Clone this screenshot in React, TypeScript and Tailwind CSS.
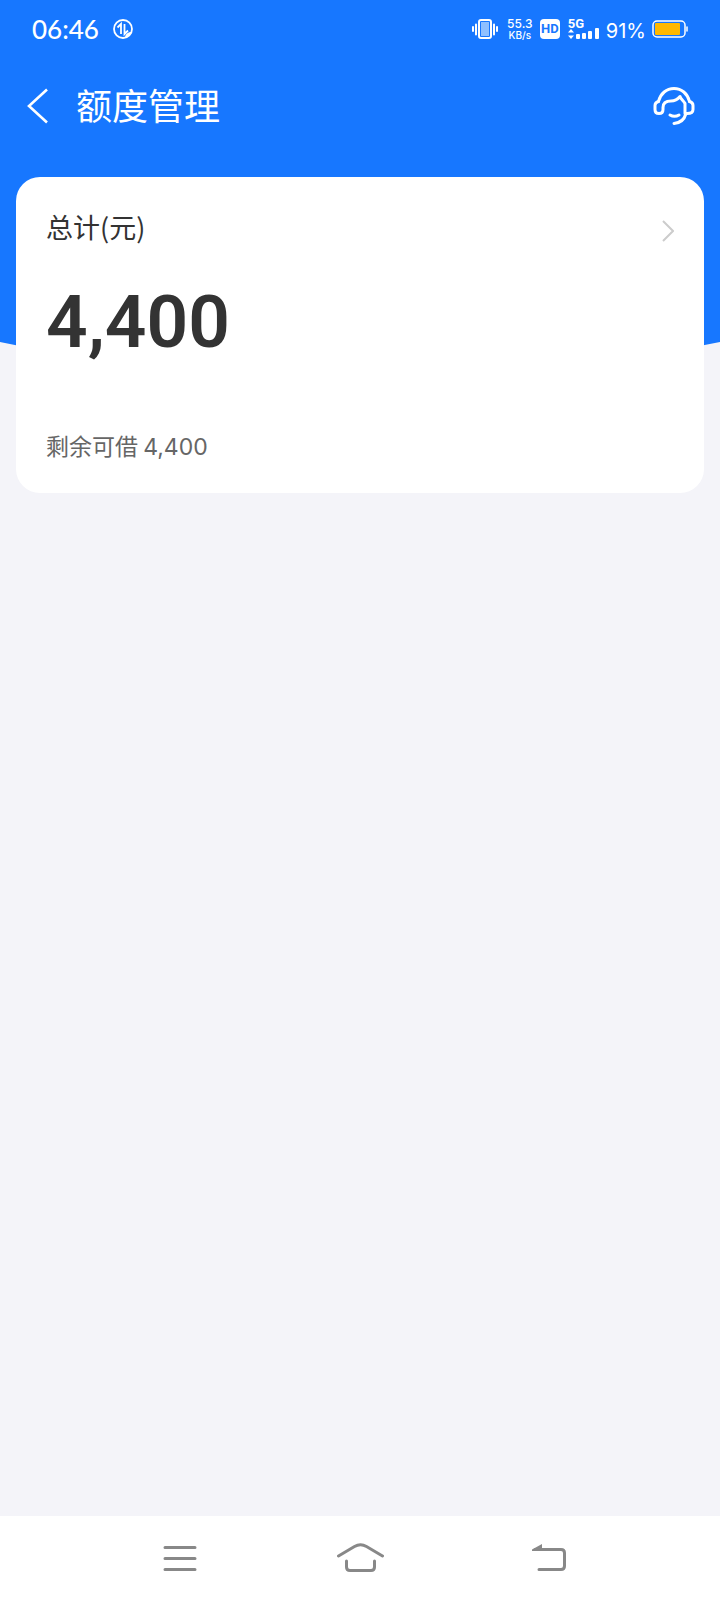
function StatusBar() {
  return (
    <div className="flex h-[58px] items-center justify-between px-8 text-white">
      <div className="flex items-center gap-[14px]">
        <time className="font-['Lato','Noto_Sans_CJK_SC',sans-serif] text-[26px] font-medium leading-8">06:46</time>
        <svg width="20" height="20" viewBox="0 0 20 20" fill="none" aria-hidden="true">
          <circle cx="10" cy="10" r="9" stroke="currentColor" strokeWidth="1.800" />
          <path d="M4.500 8.500L8 5v10M11.500 5v10l3.500-3.500" stroke="currentColor" strokeWidth="1.800" />
          <path d="M12 18.500c0-3 2.500-5.500 6.500-5.500-1 3-3 5-6.500 5.500z" fill="currentColor" />
        </svg>
      </div>
      <div className="flex items-center">
        <svg width="26" height="20" viewBox="0 0 26 20" fill="none" aria-hidden="true">
          <rect x="7" y="1" width="12" height="18" rx="2" stroke="currentColor" strokeWidth="2" />
          <rect x="9" y="3" width="8" height="14" fill="#8fc0ff" />
          <path d="M1 8v4M4 5.500v10M22 5.500v10M25 8v4" stroke="currentColor" strokeWidth="2" strokeLinecap="round" />
        </svg>
        <div className="ml-2 w-7 text-center font-['Inter',sans-serif] font-medium">
          <p className="text-[12px] leading-[12px]">55.3</p>
          <p className="text-[10px] leading-[10px]">KB/s</p>
        </div>
        <span className="ml-[6px] flex h-5 w-5 items-center justify-center rounded-[4px] bg-white font-['Roboto',sans-serif] text-[13px] font-bold leading-5 text-[#1777ff]">
          HD
        </span>
        <div className="ml-2 flex h-5 w-8 flex-col font-['Roboto',sans-serif]">
          <span className="text-[13px] font-bold leading-[10px]">5G</span>
          <svg width="32" height="10" viewBox="0 0 32 10" fill="currentColor" className="overflow-visible" aria-hidden="true">
            <path d="M0 3.500L3 0l3 3.500zM0 6.500L3 10l3-3.500z" />
            <rect x="8" y="5" width="4" height="5" rx="1" />
            <rect x="14" y="4" width="4" height="6" rx="1" />
            <rect x="20" y="2" width="4" height="8" rx="1" />
            <rect x="27" y="-1" width="4" height="11" rx="1" />
          </svg>
        </div>
        <span className="ml-[6px] mt-1 font-['Inter',sans-serif] text-[20px] leading-6">91%</span>
        <svg className="ml-[6px]" width="36" height="18" viewBox="0 0 36 18" fill="none" aria-hidden="true">
          <rect x="1" y="1" width="32" height="16" rx="4" stroke="currentColor" strokeWidth="1.500" />
          <rect x="3" y="3" width="25" height="12" rx="1" fill="#ffb800" />
          <path d="M35 7v4" stroke="currentColor" strokeWidth="1.500" strokeLinecap="round" />
        </svg>
      </div>
    </div>
  );
}

function Header() {
  return (
    <header className="flex h-24 items-center justify-between pl-[26px] pr-[25px] text-white">
      <div className="flex items-center gap-7">
        <button type="button" aria-label="返回">
          <svg width="22" height="36" viewBox="0 0 22 36" fill="none">
            <path d="M21 1.500L3 18l18 16.500" stroke="currentColor" strokeWidth="2.600" />
          </svg>
        </button>
        <h1 className="pb-1 text-[36px] leading-[48px]">额度管理</h1>
      </div>
      <button type="button" aria-label="客服">
        <svg width="42" height="40" viewBox="0 0 42 40" fill="none" stroke="currentColor" strokeWidth="3" strokeLinecap="round" strokeLinejoin="round">
          <path d="M5.500 15.500C7.500 7.500 13.500 2.500 21 2.500s13.500 5 15.500 13" />
          <path d="M5.500 15.500c-2 .5-3.500 2-3.500 4v4c0 2.500 1.500 4 4 4s4-1.500 4-4v-2c0-4.500 3.500-6.500 8-6.500 4 0 6.500-1.500 9-4.500 1 3 3.500 4 5 7v10h2c3.500 0 6-1.500 6-4v-4c0-2-1.500-3.500-3.500-4" />
          <path d="M17 29c2.500 1.500 6.500 1.500 9 0" />
          <path d="M33 27.500c-1.500 5.500-6 9.500-12 10" />
        </svg>
      </button>
    </header>
  );
}

function QuotaCard() {
  return (
    <section className="mx-4 mt-[23px] rounded-3xl bg-white px-[30px] pb-[30px] pt-8">
      <a href="#total" className="flex items-center justify-between text-[#333]">
        <h2 className="text-[27px] leading-9">总计(元)</h2>
        <svg width="13" height="22" viewBox="0 0 13 22" fill="none" className="mt-2" aria-hidden="true">
          <path d="M2 1l10 10L2 21" stroke="#ccc" strokeWidth="2" />
        </svg>
      </a>
      <p className="mt-8 font-['Roboto',sans-serif] text-[73px] font-semibold leading-[90px] text-[#333]">4,400</p>
      <p className="mt-[62px] text-[23px] leading-8 text-[#666]">
        剩余可借 <span className="font-['Inter',sans-serif]">4,400</span>
      </p>
    </section>
  );
}

function NavBar() {
  return (
    <nav className="grid h-[84px] grid-cols-[1fr_auto_1fr] items-center bg-white text-[#888]">
      <button type="button" aria-label="最近任务" className="ml-auto mr-[139px]">
        <svg width="34" height="28" viewBox="0 0 34 28" fill="none" stroke="currentColor" strokeWidth="3" strokeLinecap="round">
          <path d="M2 3.500h30M2 14.500h30M2 25.500h30" />
        </svg>
      </button>
      <button type="button" aria-label="主屏幕">
        <svg width="48" height="30" viewBox="0 0 48 30" fill="none" stroke="currentColor" strokeWidth="3" strokeLinecap="round">
          <path d="M2.500 13L18.500 3.500q6-3.500 12 0l16 9.500" />
          <path d="M10.500 18v6q0 3.500 3.500 3.500h21q3.500 0 3.500-3.500v-6" />
        </svg>
      </button>
      <button type="button" aria-label="返回上一页" className="ml-[148px] mr-auto">
        <svg width="34" height="28" viewBox="0 0 34 28" fill="none" stroke="currentColor" strokeWidth="3" strokeLinecap="round">
          <path d="M3 5.500h26q3.500 0 3.500 3.500v13q0 3.500-3.500 3.500H7" />
          <path d="M0 7V5.500L10 0v7z" fill="currentColor" stroke="none" />
        </svg>
      </button>
    </nav>
  );
}

export default function App() {
  return (
    <div className="flex min-h-screen flex-col bg-[#f4f4f9] font-['Noto_Sans_CJK_SC',sans-serif]">
      <main className="relative isolate flex-1">
        <svg className="absolute inset-x-0 top-0 -z-10 h-[380px] w-full" viewBox="0 0 720 380" preserveAspectRatio="none" aria-hidden="true">
          <path d="M0 0h720v342Q360 418 0 342z" fill="#1777ff" />
        </svg>
        <StatusBar />
        <Header />
        <QuotaCard />
      </main>
      <NavBar />
    </div>
  );
}
